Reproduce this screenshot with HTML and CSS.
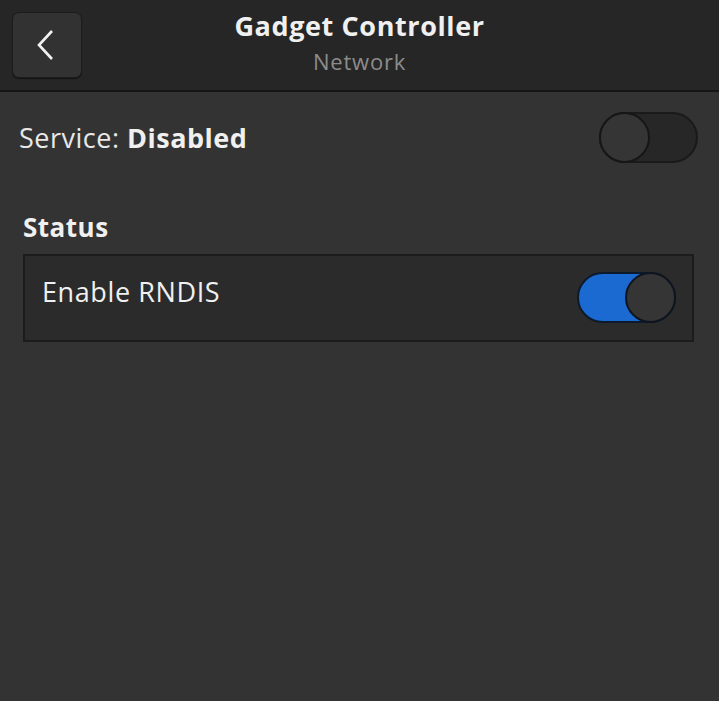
FILE: index.html
```html
<!DOCTYPE html>
<html>
<head>
<meta charset="utf-8">
<link rel="stylesheet" href="styles.css">
</head>
<body>
<div class="app">
  <header class="header">
    <button class="back" aria-label="Back">
      <svg width="24" height="32" viewBox="0 0 24 32"><path d="M18 2 L5 16 L18 30" fill="none" stroke="#f2f2f2" stroke-width="2.6" stroke-linecap="butt" stroke-linejoin="miter"/></svg>
    </button>
    <div class="titles">
      <div class="title">Gadget Controller</div>
      <div class="subtitle">Network</div>
    </div>
  </header>
  <main class="content">
    <div class="service-row">
      <div class="service">Service: <b>Disabled</b></div>
      <div class="switch off"><span class="knob"></span></div>
    </div>
    <h2 class="section">Status</h2>
    <div class="card">
      <div class="card-label">Enable RNDIS</div>
      <div class="switch on"><span class="knob"></span></div>
    </div>
  </main>
</div>
</body>
</html>
```
FILE: styles.css
```css
* { box-sizing: border-box; }
html, body { margin: 0; padding: 0; }
body {
  width: 719px;
  height: 701px;
  background: #333333;
  font-family: "Open Sans", "Noto Sans", sans-serif;
  color: #eeeeee;
  overflow: hidden;
}
.header {
  height: 92px;
  background: #262626;
  border-bottom: 2px solid #151515;
  display: flex;
  align-items: flex-start;
  padding: 12px 12px 0 12px;
  position: relative;
}
.back {
  width: 70px;
  height: 66px;
  border-radius: 7px;
  background: #323232;
  border: 1px solid #1c1c1c;
  box-shadow: 0 1px 1px rgba(0,0,0,0.5);
  display: flex;
  align-items: center;
  justify-content: center;
  padding: 0 2px 0 0;
}
.titles {
  position: absolute;
  left: 0;
  right: 0;
  top: 7px;
  text-align: center;
  pointer-events: none;
}
.title {
  font-size: 27px;
  letter-spacing: 0.6px;
  font-weight: 700;
  color: #f0f0f0;
  line-height: 38px;
}
.subtitle {
  font-size: 22px;
  letter-spacing: 0.8px;
  color: #8c8c8c;
  line-height: 32px;
}
.content {
  padding: 20px 21px 0 19px;
}
.service-row {
  display: flex;
  align-items: center;
  justify-content: space-between;
}
.service {
  font-size: 27px;
  letter-spacing: 0.5px;
  color: #e8e8e8;
}
.service b { font-weight: 700; color: #f0f0f0; }
.switch {
  width: 99px;
  height: 51px;
  border-radius: 26px;
  position: relative;
  border: 2px solid #1a1a1a;
}
.switch.off { background: #272727; }
.switch.on { background: #1b6ad2; border-color: #0d1a2c; }
.knob {
  position: absolute;
  top: -2px;
  width: 51px;
  height: 51px;
  border-radius: 50%;
  background: #353535;
  border: 2px solid #161616;
}
.switch.off .knob { left: -2px; }
.switch.on .knob { right: -2px; border-color: #0e1520; }
.section {
  margin: 48px 0 0 4px;
  font-size: 26px;
  letter-spacing: 0.5px;
  font-weight: 700;
  color: #f0f0f0;
  line-height: 32px;
}
.card {
  margin: 11px 0 0 4px;
  height: 88px;
  width: 671px;
  background: #2b2b2b;
  border: 2px solid #1c1c1c;
  display: flex;
  align-items: flex-start;
  justify-content: space-between;
  padding: 16px 16px 0 17px;
}
.card-label {
  font-size: 27px;
  letter-spacing: 0.6px;
  color: #f0f0f0;
  line-height: 40px;
  margin-top: 0;
}
```
